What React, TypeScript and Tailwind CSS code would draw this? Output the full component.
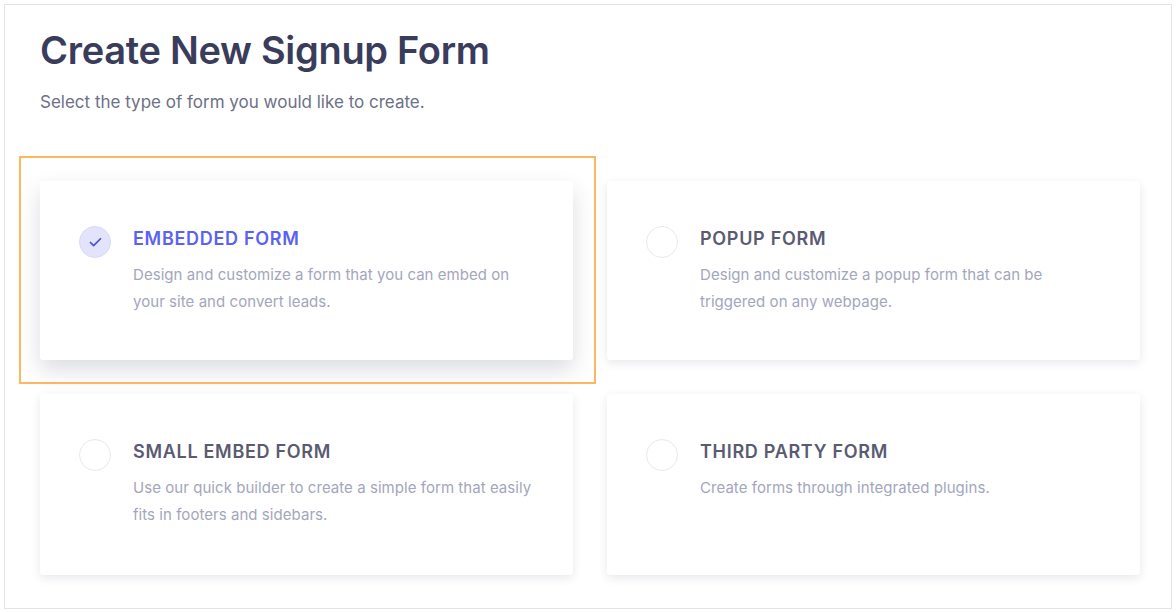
import { Check } from 'lucide-react';

type FormType = {
  key: string;
  title: string;
  description: string;
};

const formTypes: FormType[] = [
  {
    key: 'embedded',
    title: 'EMBEDDED FORM',
    description: 'Design and customize a form that you can embed on your site and convert leads.',
  },
  {
    key: 'popup',
    title: 'POPUP FORM',
    description: 'Design and customize a popup form that can be triggered on any webpage.',
  },
  {
    key: 'small',
    title: 'SMALL EMBED FORM',
    description: 'Use our quick builder to create a simple form that easily fits in footers and sidebars.',
  },
  {
    key: 'third',
    title: 'THIRD PARTY FORM',
    description: 'Create forms through integrated plugins.',
  },
];

function FormCard({ form, selected }: { form: FormType; selected: boolean }) {
  return (
    <div className="relative h-full">
      {/* 선택 표시 테두리 */}
      {selected && (
        <div className="pointer-events-none absolute -left-[21px] -top-[25px] -right-[23px] -bottom-[24px] border-2 border-[#fdb760]" />
      )}
      <div
        className={
          selected
            ? 'flex h-full rounded-[3px] bg-white pl-[39px] pt-[45px] shadow-[0_10px_22px_rgba(40,45,80,0.16)]'
            : 'flex h-full rounded-[3px] bg-white pl-[39px] pt-[45px] shadow-[0_3px_10px_rgba(40,45,80,0.11)]'
        }
      >
        <div
          className={
            selected
              ? 'flex h-[32px] w-[32px] shrink-0 items-center justify-center rounded-full border border-[#d8daf9] bg-[#e3e4fc]'
              : 'h-[32px] w-[32px] shrink-0 rounded-full border border-[#e8e8ef] bg-white'
          }
        >
          {selected && <Check size={15} strokeWidth={2.8} className="text-[#4a52dc]" />}
        </div>
        <div className="ml-[22px] pt-px pr-[30px]">
          <h3
            className={
              selected
                ? 'text-[18px] leading-[24px] font-semibold tracking-[0.7px] text-[#5a62f4]'
                : 'text-[18px] leading-[24px] font-semibold tracking-[0.7px] text-[#5a5b72]'
            }
          >
            {form.title}
          </h3>
          <p className="mt-[10px] max-w-[400px] text-[15px] leading-[27px] tracking-[0.05px] text-[#a3a6bc]">
            {form.description}
          </p>
        </div>
      </div>
    </div>
  );
}

export default function App() {
  return (
    <div className="min-h-[613px] bg-white p-[4px] font-['Inter','Liberation_Sans',sans-serif]">
      <div className="h-[605px] border border-[#e4e4e6] bg-white pl-[35px] pt-[21px]">
        {/* 페이지 헤더 */}
        <h1 className="text-[38px] leading-[48px] font-semibold tracking-[-0.3px] text-[#3a3c5c]">
          Create New Signup Form
        </h1>
        <p className="mt-[16px] text-[17px] leading-[24px] text-[#6d7087]">
          Select the type of form you would like to create.
        </p>

        {/* 폼 종류 선택 */}
        <div className="mt-[67px] grid w-[1100px] grid-cols-[533px_533px] grid-rows-[179px_181px] gap-[34px]">
          {formTypes.map((form) => (
            <FormCard key={form.key} form={form} selected={form.key === 'embedded'} />
          ))}
        </div>
      </div>
    </div>
  );
}
